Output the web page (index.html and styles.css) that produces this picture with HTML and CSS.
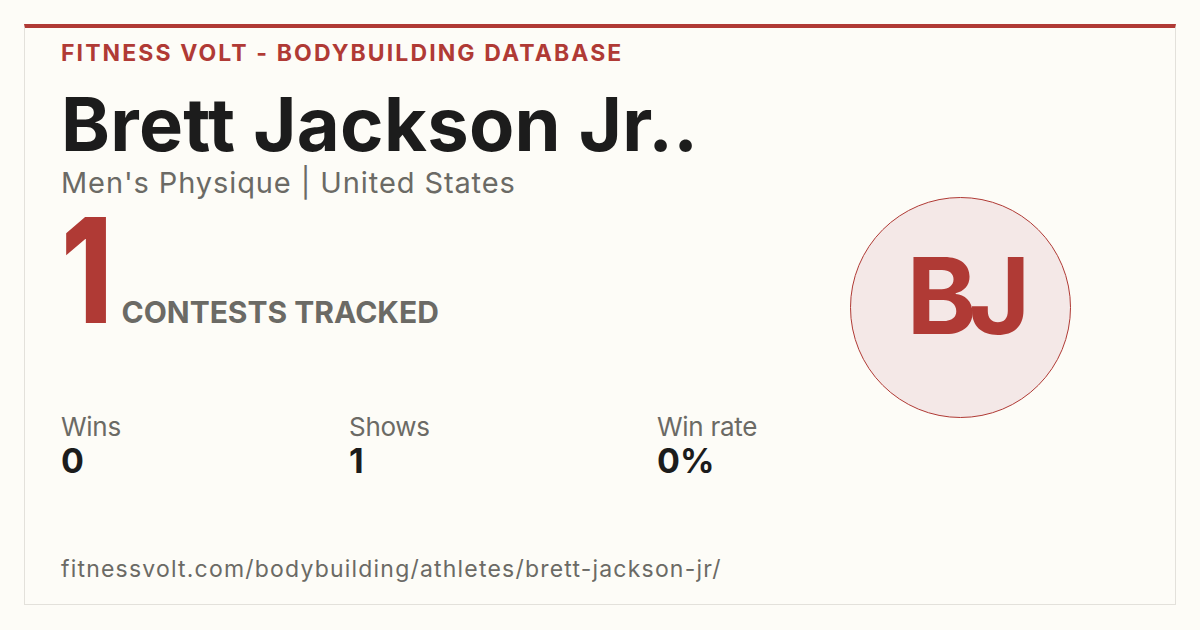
FILE: index.html
```html
<!DOCTYPE html>
<html lang="en">
<head>
<meta charset="utf-8">
<title>Brett Jackson Jr.. - Fitness Volt</title>
<link rel="stylesheet" href="styles.css">
</head>
<body>
<main class="card">
  <section class="main">
    <div class="eyebrow">FITNESS VOLT - BODYBUILDING DATABASE</div>
    <h1 class="name">Brett Jackson Jr..</h1>
    <div class="sub">Men's Physique | United States</div>
    <div class="headline">
      <span class="big">1</span>
      <span class="big-label">CONTESTS TRACKED</span>
    </div>
    <div class="stats">
      <div class="stat">
        <div class="stat-label">Wins</div>
        <div class="stat-value">0</div>
      </div>
      <div class="stat">
        <div class="stat-label">Shows</div>
        <div class="stat-value">1</div>
      </div>
      <div class="stat">
        <div class="stat-label">Win rate</div>
        <div class="stat-value">0%</div>
      </div>
    </div>
    <div class="url">fitnessvolt.com/bodybuilding/athletes/brett-jackson-jr/</div>
  </section>
  <aside class="side">
    <div class="avatar">BJ</div>
  </aside>
</main>
</body>
</html>
```
FILE: styles.css
```css
* { box-sizing: border-box; }
html, body {
  margin: 0;
  padding: 0;
  background: #fdfcf7;
}
body {
  width: 1200px;
  height: 630px;
  padding: 24px;
  font-family: Inter, "Noto Sans", sans-serif;
  color: #1c1c1c;
}
.card {
  width: 1152px;
  height: 581px;
  border: 1px solid #e3e1db;
  border-top: 4px solid #b03a35;
  background: #fdfcf7;
  display: flex;
  padding: 0 104px 0 36px;
}
.main {
  flex: 1;
  display: flex;
  flex-direction: column;
}
.eyebrow {
  margin-top: 13px;
  font-size: 23px;
  line-height: 24px;
  font-weight: 700;
  letter-spacing: 2.1px;
  color: #b03a35;
}
.name {
  margin: 19px 0 0;
  font-size: 74px;
  line-height: 80px;
  font-weight: 700;
  letter-spacing: 0.3px;
  color: #1c1c1c;
}
.sub {
  margin-top: 2px;
  font-size: 29px;
  line-height: 34px;
  letter-spacing: 0.9px;
  color: #6b6a65;
}
.headline {
  display: flex;
  align-items: baseline;
  margin-top: 0;
  height: 140px;
}
.big {
  display: inline-block;
  font-size: 146px;
  line-height: 140px;
  font-weight: 800;
  color: #b03a35;
  transform: scaleX(0.8);
  transform-origin: 0 0;
  margin-right: -4px;
}
.big-label {
  font-size: 30px;
  line-height: 36px;
  font-weight: 700;
  letter-spacing: 0;
  color: #6b6a65;
}
.stats {
  display: grid;
  grid-template-columns: 288px 308px auto;
  margin-top: 73px;
}
.stat-label {
  font-size: 26px;
  line-height: 28px;
  letter-spacing: -0.3px;
  color: #6b6a65;
}
.stat-value {
  margin-top: 2px;
  font-size: 34px;
  line-height: 36px;
  font-weight: 700;
  color: #1c1c1c;
}
.url {
  margin-top: auto;
  margin-bottom: 21px;
  font-size: 23px;
  line-height: 28px;
  letter-spacing: 1.2px;
  color: #6b6a65;
}
.side {
  display: flex;
  align-items: flex-start;
  padding-top: 169px;
}
.avatar {
  width: 221px;
  height: 221px;
  border-radius: 50%;
  border: 1.5px solid #b03a35;
  background: #f4e8e7;
  color: #b03a35;
  font-size: 106px;
  font-weight: 700;
  display: flex;
  align-items: center;
  justify-content: center;
  padding-bottom: 24px;
  padding-left: 8px;
  letter-spacing: -8px;
}
```
